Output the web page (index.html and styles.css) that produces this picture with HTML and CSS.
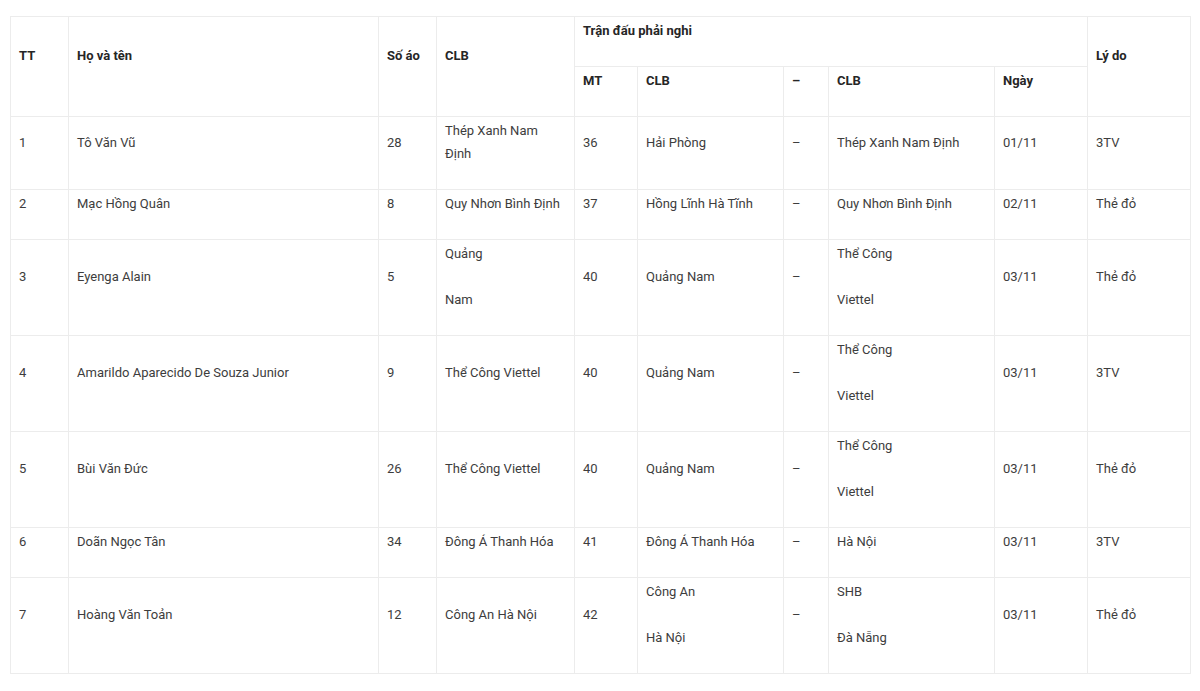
FILE: index.html
```html
<!DOCTYPE html>
<html lang="vi">
<head>
<meta charset="utf-8">
<title>Danh sách cầu thủ bị treo giò</title>
<link rel="stylesheet" href="styles.css">
</head>
<body>
<div class="page">
<table class="suspensions">
  <colgroup>
    <col class="c-tt"><col class="c-name"><col class="c-no"><col class="c-club">
    <col class="c-mt"><col class="c-home"><col class="c-dash"><col class="c-away">
    <col class="c-date"><col class="c-reason">
  </colgroup>
  <thead>
    <tr>
      <th rowspan="2"><p>TT</p></th>
      <th rowspan="2"><p>Họ và tên</p></th>
      <th rowspan="2"><p>Số áo</p></th>
      <th rowspan="2"><p>CLB</p></th>
      <th colspan="5"><p>Trận đấu phải nghi</p></th>
      <th rowspan="2"><p>Lý do</p></th>
    </tr>
    <tr>
      <th><p>MT</p></th>
      <th><p>CLB</p></th>
      <th><p>–</p></th>
      <th><p>CLB</p></th>
      <th><p>Ngày</p></th>
    </tr>
  </thead>
  <tbody>
    <tr>
      <td><p>1</p></td><td><p>Tô Văn Vũ</p></td><td><p>28</p></td><td><p>Thép Xanh Nam Định</p></td>
      <td><p>36</p></td><td><p>Hải Phòng</p></td><td><p>–</p></td><td><p>Thép Xanh Nam Định</p></td>
      <td><p>01/11</p></td><td><p>3TV</p></td>
    </tr>
    <tr>
      <td><p>2</p></td><td><p>Mạc Hồng Quân</p></td><td><p>8</p></td><td><p>Quy Nhơn Bình Định</p></td>
      <td><p>37</p></td><td><p>Hồng Lĩnh Hà Tĩnh</p></td><td><p>–</p></td><td><p>Quy Nhơn Bình Định</p></td>
      <td><p>02/11</p></td><td><p>Thẻ đỏ</p></td>
    </tr>
    <tr>
      <td><p>3</p></td><td><p>Eyenga Alain</p></td><td><p>5</p></td><td><p>Quảng</p><p>Nam</p></td>
      <td><p>40</p></td><td><p>Quảng Nam</p></td><td><p>–</p></td><td><p>Thể Công</p><p>Viettel</p></td>
      <td><p>03/11</p></td><td><p>Thẻ đỏ</p></td>
    </tr>
    <tr>
      <td><p>4</p></td><td><p>Amarildo Aparecido De Souza Junior</p></td><td><p>9</p></td><td><p>Thể Công Viettel</p></td>
      <td><p>40</p></td><td><p>Quảng Nam</p></td><td><p>–</p></td><td><p>Thể Công</p><p>Viettel</p></td>
      <td><p>03/11</p></td><td><p>3TV</p></td>
    </tr>
    <tr>
      <td><p>5</p></td><td><p>Bùi Văn Đức</p></td><td><p>26</p></td><td><p>Thể Công Viettel</p></td>
      <td><p>40</p></td><td><p>Quảng Nam</p></td><td><p>–</p></td><td><p>Thể Công</p><p>Viettel</p></td>
      <td><p>03/11</p></td><td><p>Thẻ đỏ</p></td>
    </tr>
    <tr>
      <td><p>6</p></td><td><p>Doãn Ngọc Tân</p></td><td><p>34</p></td><td><p>Đông Á Thanh Hóa</p></td>
      <td><p>41</p></td><td><p>Đông Á Thanh Hóa</p></td><td><p>–</p></td><td><p>Hà Nội</p></td>
      <td><p>03/11</p></td><td><p>3TV</p></td>
    </tr>
    <tr>
      <td><p>7</p></td><td><p>Hoàng Văn Toản</p></td><td><p>12</p></td><td><p>Công An Hà Nội</p></td>
      <td><p>42</p></td><td><p>Công An</p><p>Hà Nội</p></td><td><p>–</p></td><td><p>SHB</p><p>Đà Nẵng</p></td>
      <td><p>03/11</p></td><td><p>Thẻ đỏ</p></td>
    </tr>
  </tbody>
</table>
</div>
</body>
</html>
```

FILE: styles.css
```css
html, body {
  margin: 0;
  padding: 0;
  background: #ffffff;
}

.page {
  padding: 16px 10px;
  font-family: Roboto, "Noto Sans", "Liberation Sans", sans-serif;
  font-size: 13px;
  line-height: 23px;
  color: #3d3d3d;
}

.suspensions {
  width: 1180px;
  table-layout: fixed;
  border-collapse: collapse;
}

.c-tt { width: 58px; }
.c-name { width: 310px; }
.c-no { width: 58px; }
.c-club { width: 138px; }
.c-mt { width: 63px; }
.c-home { width: 146px; }
.c-dash { width: 45px; }
.c-away { width: 166px; }
.c-date { width: 93px; }
.c-reason { width: 103px; }

.suspensions th,
.suspensions td {
  border: 1px solid #ececec;
  padding: 2px 8px 1px;
  vertical-align: middle;
  text-align: left;
}

.suspensions th {
  font-weight: 700;
  color: #262626;
}

.suspensions p {
  margin: 0 0 23px;
}
```
